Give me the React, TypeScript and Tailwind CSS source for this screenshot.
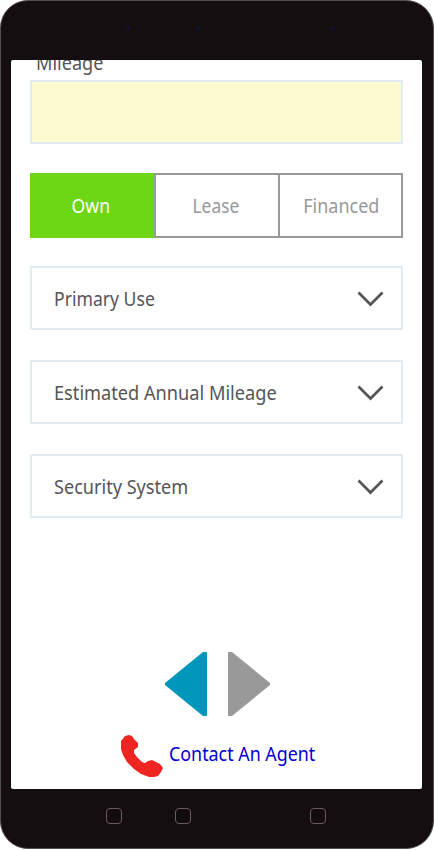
import React from "react";

function Chevron() {
  return (
    <svg className="mr-[16px] mt-px h-[16px] w-[28px]" viewBox="0 0 28 16" fill="none">
      <path d="M1.5 1.5L13.5 13.5L25.5 1.5" stroke="#555557" strokeWidth="2.7" />
    </svg>
  );
}

function SelectField({ label, scale }: { label: string; scale: string }) {
  return (
    <button className="flex h-[64px] w-full items-center justify-between border-2 border-[#e0ebf3] bg-white pl-[22px]">
      <span className={`mt-[2px] inline-block origin-left whitespace-nowrap text-[#555557] ${scale}`}>{label}</span>
      <Chevron />
    </button>
  );
}

function HomeKey({ className }: { className: string }) {
  return (
    <span className={`flex size-[40px] items-center justify-center rounded-full border border-[#181013] ${className}`}>
      <span className="size-[16px] rounded-[4px] border border-[#6b5a5b] bg-[#120b10]" />
    </span>
  );
}

export default function App() {
  return (
    <div className="h-[850px] w-[434px] bg-white font-['Noto_Sans','Open_Sans',sans-serif] text-[20px] leading-[28px]">
      <div className="flex h-[849px] w-full flex-col rounded-[28px] border border-[#55504d] bg-[#150e10]">
        <header className="flex h-[59px] shrink-0 items-center pb-[5px]">
          <span className="ml-[125px] size-[5px] rounded-full bg-[#131127]" />
          <span className="ml-[64px] size-[5px] rounded-full bg-[#131127]" />
          <span className="ml-[130px] size-[5px] rounded-full bg-[#131127]" />
        </header>

        <main className="mx-[10px] flex h-[729px] w-[411px] shrink-0 flex-col overflow-hidden rounded-[2px] bg-white px-[19px]">
          <div className="h-[20px] pl-[6px]">
            <div className="-mt-[11px] origin-left scale-x-[0.905] whitespace-nowrap text-[#555557]">Mileage</div>
          </div>
          <div className="h-[64px] shrink-0 border-2 border-[#e0ebf3] bg-[#fefbd2]" />

          <div className="mt-[29px] flex h-[65px] shrink-0 text-[#999999]">
            <button className="flex w-[124px] items-center justify-center bg-[#6dd716] pr-[3px] text-white">
              <span className="inline-block scale-x-[0.88]">Own</span>
            </button>
            <button className="flex w-[126px] items-center justify-center border-2 border-[#999999] pr-[2px]">
              <span className="inline-block scale-x-[0.87]">Lease</span>
            </button>
            <button className="flex w-[123px] items-center justify-center border-2 border-l-0 border-[#999999] pl-px">
              <span className="inline-block scale-x-[0.9]">Financed</span>
            </button>
          </div>

          <div className="mt-[28px] flex flex-col gap-[30px]">
            <SelectField label="Primary Use" scale="scale-x-[0.88]" />
            <SelectField label="Estimated Annual Mileage" scale="scale-x-[0.909]" />
            <SelectField label="Security System" scale="scale-x-[0.905]" />
          </div>

          <div className="mt-[134px] flex gap-[21px] pl-[135px]">
            <svg className="h-[64px] w-[42px]" viewBox="0 0 42 64">
              <path d="M42 0H38L0 31V33L38 64H42Z" fill="#0096bc" />
            </svg>
            <svg className="h-[64px] w-[42px]" viewBox="0 0 42 64">
              <path d="M0 0H4L42 31V33L4 64H0Z" fill="#999999" />
            </svg>
          </div>

          <div className="mt-[19px] flex pl-[91px]">
            <svg className="h-[42px] w-[42px] shrink-0" viewBox="0 0 42 42" fill="#ef2522">
              <path d="M4 1L8 0L11 1L13 4L17 8V12L13 15V18L16 22L21 27L24 28L27 26L31 25L35 27L39 29L42 33L40 37L37 41L33 42L28 42L20 39L13 34L6 27L2 20L0 14V6Z" />
            </svg>
            <a href="#" className="ml-[6px] mt-[5px] inline-block origin-left scale-x-[0.893] whitespace-nowrap text-[#0000cc]">Contact An Agent</a>
          </div>
        </main>

        <footer className="flex h-[54px] shrink-0 items-center">
          <HomeKey className="ml-[93px]" />
          <HomeKey className="ml-[29px]" />
          <HomeKey className="ml-[95px]" />
        </footer>
      </div>
    </div>
  );
}
